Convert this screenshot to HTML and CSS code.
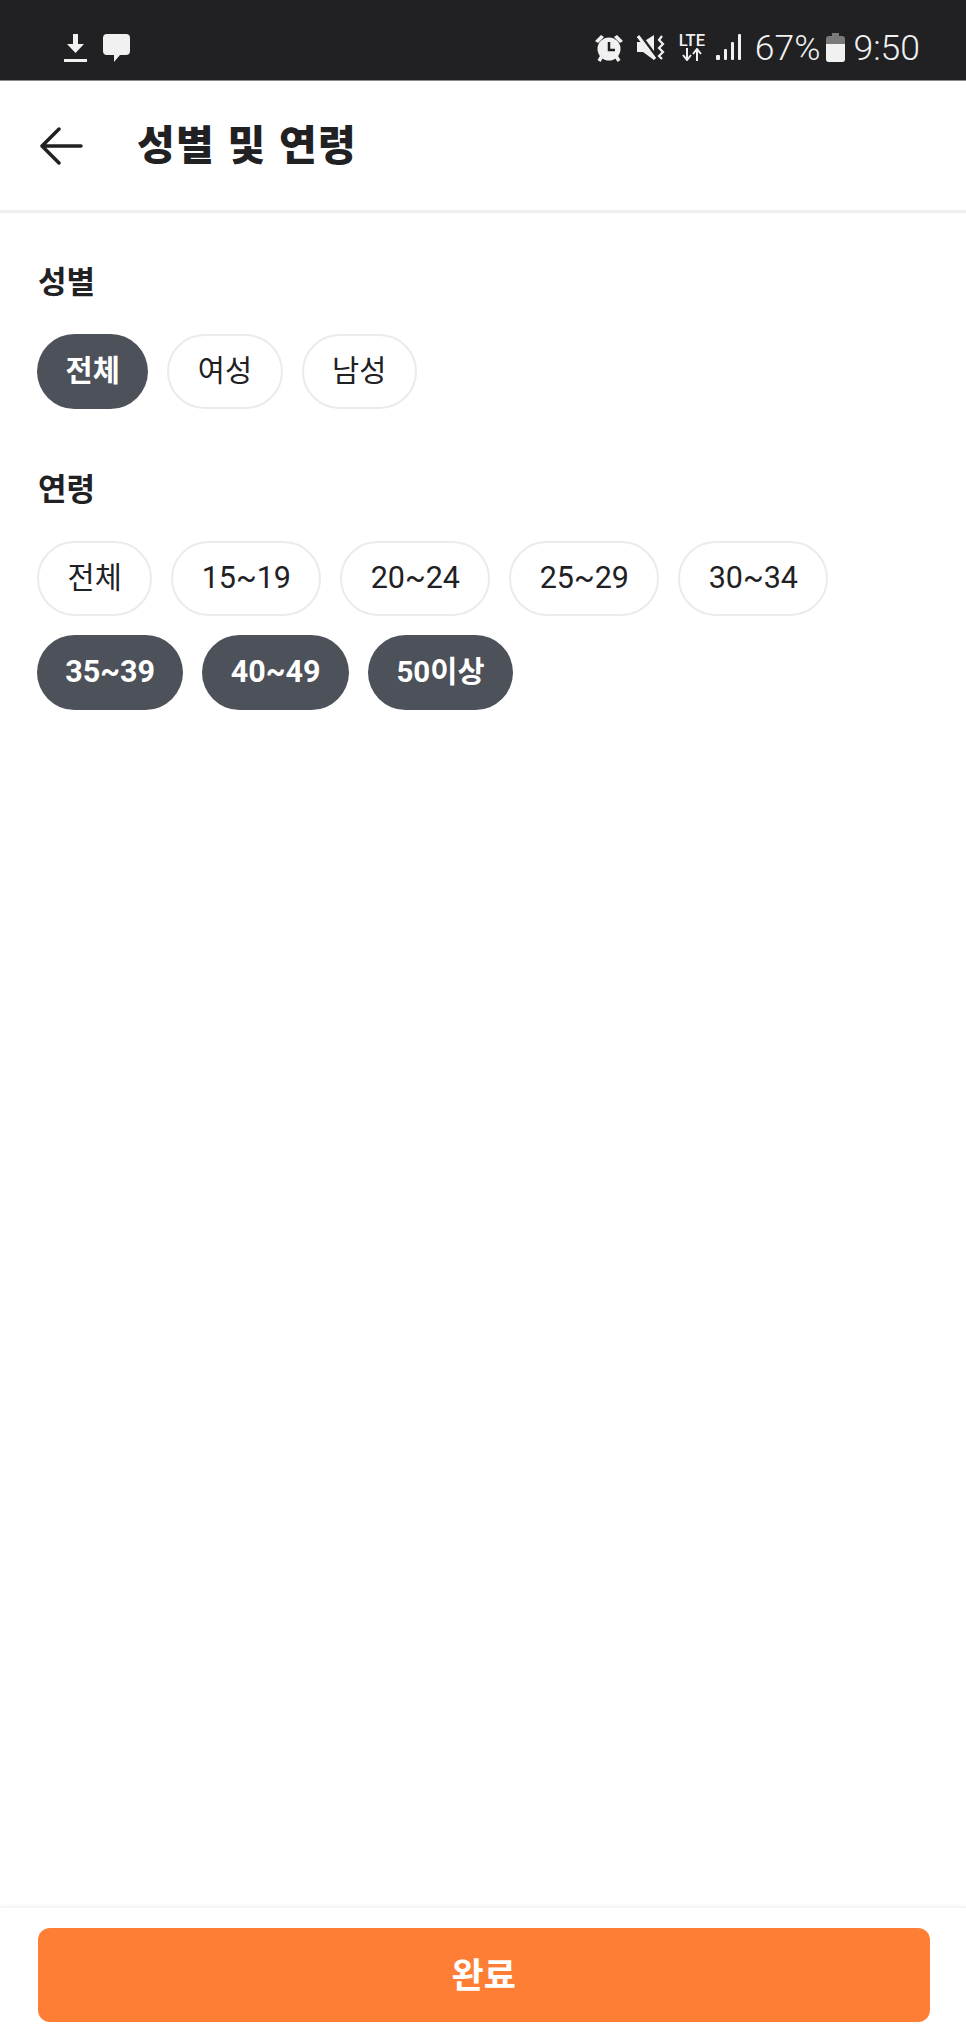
FILE: index.html
```html
<!DOCTYPE html>
<html lang="ko">
<head>
    <meta charset="UTF-8">
    <meta name="viewport" content="width=device-width, initial-scale=1.0">
    <title>성별 및 연령</title>
    <link rel="stylesheet" href="styles.css">
</head>
<body>
    <div class="page">
        <div class="status-bar">
            <div class="status-left">
                <svg class="icon-download" width="23" height="30" viewBox="0 0 23 30">
                    <path d="M9 1h5v10h6l-8.500 9L3 11h6z" fill="#f1f1f1"/>
                    <rect x="0" y="26" width="23" height="3" fill="#f1f1f1"/>
                </svg>
                <svg class="icon-chat" width="27" height="28" viewBox="0 0 27 28">
                    <path d="M4 0h19a4 4 0 0 1 4 4v13a4 4 0 0 1-4 4h-6l-6 7v-7H4a4 4 0 0 1-4-4V4a4 4 0 0 1 4-4z" fill="#f1f1f1"/>
                </svg>
            </div>
            <div class="status-right">
                <svg class="icon-alarm" width="28" height="28" viewBox="0 0 28 28">
                    <path d="M0 7l6-6 3 2-6 6zM28 7l-6-6-3 2 6 6z" fill="#f1f1f1"/>
                    <path d="M7 22l-3 5M21 22l3 5" stroke="#f1f1f1" stroke-width="3.500"/>
                    <circle cx="14" cy="15" r="11.500" fill="#f1f1f1"/>
                    <path d="M14 8v8h6" fill="none" stroke="#212124" stroke-width="2.500"/>
                </svg>
                <svg class="icon-mute" width="28" height="27" viewBox="0 0 28 27">
                    <path d="M0 8h6l11-7v25L6 18H0z" fill="#f1f1f1"/>
                    <path d="M2 1l17 23" stroke="#212124" stroke-width="5"/>
                    <path d="M1 2l17 23" stroke="#f1f1f1" stroke-width="3"/>
                    <path d="M25 2l-3 4 4 4-4 4 4 4-4 4 3 3" fill="none" stroke="#f1f1f1" stroke-width="2.200"/>
                </svg>
                <div class="lte">
                    <span class="lte-text">LTE</span>
                    <svg width="22" height="13" viewBox="0 0 22 13">
                        <path d="M6 0v11M2 7l4 5 4-5M16 13V2M12 6l4-5 4 5" fill="none" stroke="#f1f1f1" stroke-width="2"/>
                    </svg>
                </div>
                <svg class="icon-signal" width="26" height="27" viewBox="0 0 26 27">
                    <rect x="0" y="21" width="4" height="5" rx="1" fill="#f1f1f1"/>
                    <rect x="8" y="15" width="3" height="11" rx="1" fill="#f1f1f1"/>
                    <rect x="15" y="8" width="3" height="18" rx="1" fill="#f1f1f1"/>
                    <rect x="22" y="0" width="3" height="26" rx="1" fill="#f1f1f1"/>
                </svg>
                <span class="status-text percent">67%</span>
                <svg class="icon-battery" width="19" height="29" viewBox="0 0 19 29">
                    <path d="M6 0h7v3h3a3 3 0 0 1 3 3v20a3 3 0 0 1-3 3H3a3 3 0 0 1-3-3V6a3 3 0 0 1 3-3h3z" fill="#7a7a7a"/>
                    <path d="M0 11h19v15a3 3 0 0 1-3 3H3a3 3 0 0 1-3-3z" fill="#f1f1f1"/>
                </svg>
                <span class="status-text clock">9:50</span>
            </div>
        </div>

        <header class="header">
            <svg class="back-icon" width="44" height="38" viewBox="0 0 44 38">
                <path d="M42 19H3M20 2L3 19l17 17" fill="none" stroke="#212124" stroke-width="3.500" stroke-linecap="round" stroke-linejoin="round"/>
            </svg>
            <h1 class="header-title">성별 및 연령</h1>
        </header>

        <main class="content">
            <section class="filter">
                <h2 class="filter-title">성별</h2>
                <div class="chips">
                    <span class="chip chip-on">전체</span>
                    <span class="chip">여성</span>
                    <span class="chip">남성</span>
                </div>
            </section>
            <section class="filter">
                <h2 class="filter-title">연령</h2>
                <div class="chips">
                    <span class="chip">전체</span>
                    <span class="chip chip-num">15~19</span>
                    <span class="chip chip-num">20~24</span>
                    <span class="chip chip-num">25~29</span>
                    <span class="chip chip-num">30~34</span>
                    <span class="chip chip-num chip-on">35~39</span>
                    <span class="chip chip-num chip-on">40~49</span>
                    <span class="chip chip-on">50이상</span>
                </div>
            </section>
        </main>

        <footer class="footer">
            <button class="done-button" type="button">완료</button>
        </footer>
    </div>
</body>
</html>
```

FILE: styles.css
```css
* {
    box-sizing: border-box;
}
body {
    margin: 0;
    background-color: #FFFFFF;
    color: #212124;
    font-family: Roboto, "Noto Sans CJK KR", sans-serif;
}
.page {
    display: flex;
    flex-direction: column;
    height: 100vh;
}
.status-bar {
    display: flex;
    justify-content: space-between;
    align-items: center;
    height: 81px;
    padding: 15px 46px 0 64px;
    background-color: #212124;
    border-bottom: 1px solid #8a8a8a;
}
.status-left,
.status-right {
    display: flex;
    align-items: center;
}
.icon-chat {
    margin-left: 16px;
}
.icon-mute {
    margin-left: 14px;
}
.lte {
    display: flex;
    flex-direction: column;
    align-items: center;
    width: 28px;
    margin-left: 13px;
}
.lte-text {
    color: #F1F1F1;
    font-size: 16.500px;
    font-weight: 500;
    line-height: 14px;
}
.icon-signal {
    margin-left: 10px;
}
.status-text {
    color: #F1F1F1;
    font-size: 35.500px;
    font-weight: 300;
    line-height: 40px;
}
.percent {
    margin-left: 13px;
}
.icon-battery {
    margin-left: 6px;
}
.clock {
    margin-left: 8px;
}
.header {
    display: flex;
    align-items: center;
    height: 132px;
    padding-left: 39px;
    border-bottom: 3px solid #EEEFF1;
}
.header-title {
    margin: 0 0 8px 54px;
    font-family: "Noto Sans CJK KR", sans-serif;
    font-size: 41px;
    font-weight: 900;
    letter-spacing: 1.200px;
    line-height: 50px;
}
.content {
    flex: 1;
    padding: 0 37px;
}
.filter {
    padding-top: 47px;
}
.filter + .filter {
    padding-top: 58px;
}
.filter-title {
    margin: 0 0 34px;
    padding-left: 1px;
    font-family: "Noto Sans CJK KR", sans-serif;
    font-size: 31px;
    font-weight: 700;
    line-height: 40px;
}
.chips {
    display: flex;
    flex-wrap: wrap;
    gap: 19px;
}
.chip {
    display: flex;
    align-items: center;
    height: 75px;
    padding: 0 28.500px;
    border: 2px solid #EAEBEE;
    border-radius: 38px;
    font-size: 29.500px;
    line-height: 1;
}
.chip-num {
    padding: 0 28.350px;
    font-size: 30.500px;
}
.chip-on {
    background-color: #4D5159;
    border: none;
    color: #FFFFFF;
    font-weight: 700;
}
.footer {
    padding: 20px 36px 17px 37.500px;
    border-top: 1px solid #F2F3F5;
    box-shadow: 0 -2px 3px rgba(0, 0, 0, 0.03);
}
.done-button {
    display: block;
    width: 100%;
    height: 94px;
    padding: 0 0 5px;
    border: none;
    border-radius: 12px;
    background-color: #FF7E36;
    color: #FFFFFF;
    font-family: "Noto Sans CJK KR", sans-serif;
    font-size: 35px;
    font-weight: 700;
}
```
